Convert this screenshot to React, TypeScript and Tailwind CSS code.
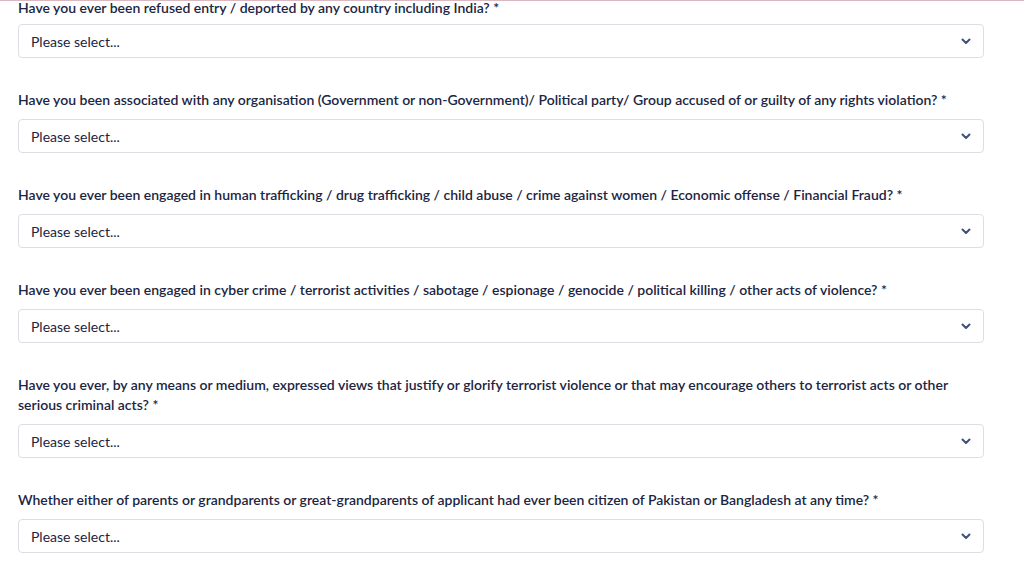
import React from 'react';

const questions = [
  'Have you ever been refused entry / deported by any country including India?',
  'Have you been associated with any organisation (Government or non-Government)/ Political party/ Group accused of or guilty of any rights violation?',
  'Have you ever been engaged in human trafficking / drug trafficking / child abuse / crime against women / Economic offense / Financial Fraud?',
  'Have you ever been engaged in cyber crime / terrorist activities / sabotage / espionage / genocide / political killing / other acts of violence?',
  'Have you ever, by any means or medium, expressed views that justify or glorify terrorist violence or that may encourage others to terrorist acts or other serious criminal acts?',
  'Whether either of parents or grandparents or great-grandparents of applicant had ever been citizen of Pakistan or Bangladesh at any time?',
];

const Chevron = () => (
  <svg width="10" height="7" viewBox="0 0 10 7" fill="none">
    <path d="M1.5 1.5L5 5L8.5 1.5" stroke="#3d5075" strokeWidth="2" strokeLinecap="round" strokeLinejoin="round" />
  </svg>
);

const SelectField = () => (
  <div className="flex h-[34px] items-center justify-between rounded border border-[#dcdee3] bg-white pl-3 pr-[12px]">
    <span className="text-[14px] text-[#1c2541]">Please select...</span>
    <Chevron />
  </div>
);

export default function App() {
  return (
    <div className="min-h-[580px] w-[1024px] overflow-hidden border-t border-[#d9b8c0] bg-white font-['Lato',sans-serif]">
      <div className="-mt-[4px] flex w-[984px] flex-col gap-[31px] pl-[18px]">
        {questions.map((q, i) => (
          <div key={q} className={i === 0 ? 'flex flex-col gap-[6px]' : 'flex flex-col gap-[9px]'}>
            <label className="pt-px text-[14px] font-semibold leading-[20px] text-[#1c2541]">
              {q} *
            </label>
            <SelectField />
          </div>
        ))}
      </div>
    </div>
  );
}
